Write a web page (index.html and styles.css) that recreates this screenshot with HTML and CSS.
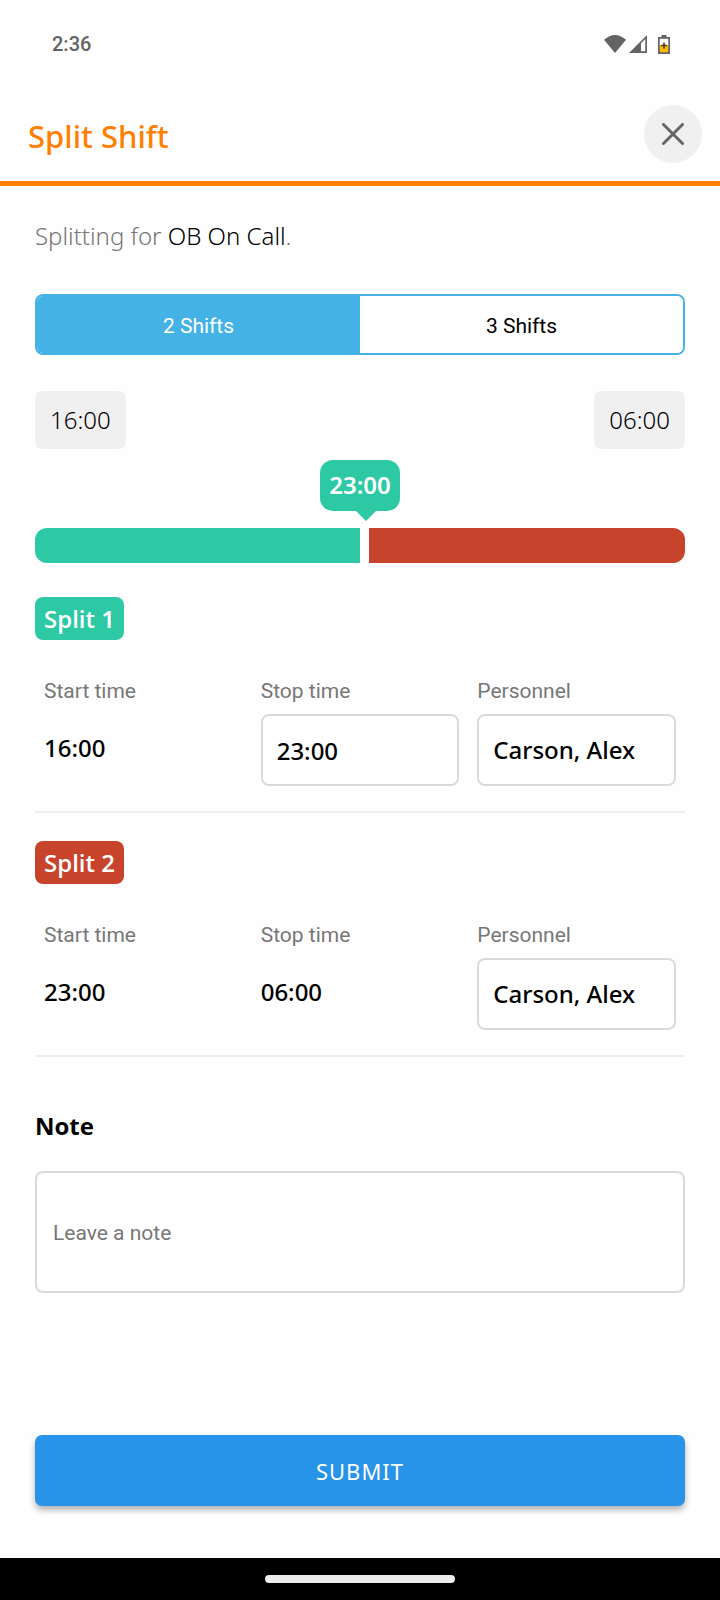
FILE: index.html
```html
<!DOCTYPE html>
<html lang="en">
<head>
<meta charset="utf-8">
<meta name="viewport" content="width=device-width, initial-scale=1">
<title>Split Shift</title>
<link rel="stylesheet" href="styles.css">
</head>
<body>
<div class="screen">
  <div class="status-bar">
    <span class="clock">2:36</span>
    <div class="status-icons">
      <svg width="22" height="18" viewBox="0 0 22 18" aria-hidden="true"><path d="M0 4.800Q11-4.800 22 4.800L11 18Z" fill="#636363"/></svg>
      <svg width="18" height="18" viewBox="0 0 18 18" aria-hidden="true"><path d="M0 18L18 0V18Z" fill="#636363"/><path d="M12 8.200L16.300 4V16.300H12Z" fill="#fff"/></svg>
      <svg class="battery" width="12" height="19" viewBox="0 0 12 19" aria-hidden="true"><path d="M3.500 0H8.500V2H12V19H0V2H3.500Z" fill="#636363"/><path d="M1.700 3.800H10.300V10H1.700Z" fill="#fff"/><path d="M1.700 10H10.300V17.300H1.700Z" fill="#fbb904"/><path d="M6 7.500V13.500M3 10.500H9" stroke="#4a4020" stroke-width="1.700"/></svg>
    </div>
  </div>

  <header class="header">
    <h1 class="title">Split Shift</h1>
    <button class="close" type="button" aria-label="Close">
      <svg width="22" height="22" viewBox="0 0 22 22" aria-hidden="true"><path d="M1.500 1.500L20.500 20.500M20.500 1.500L1.500 20.500" stroke="#666" stroke-width="3" stroke-linecap="round"/></svg>
    </button>
  </header>

  <form class="content">
    <p class="intro">Splitting for <span class="shift-name">OB On Call</span>.</p>

    <div class="segments" role="group" aria-label="Number of shifts">
      <button class="segment segment-active" type="button" aria-pressed="true">2 Shifts</button>
      <button class="segment" type="button" aria-pressed="false">3 Shifts</button>
    </div>

    <div class="range-ends">
      <span class="range-end">16:00</span>
      <span class="range-end">06:00</span>
    </div>

    <div class="slider">
      <output class="bubble" for="split-at">23:00</output>
      <input class="track" id="split-at" type="range" min="0" max="14" value="7" aria-label="Split time">
    </div>

    <section class="split">
      <h2 class="badge badge-first">Split 1</h2>
      <div class="fields">
        <div class="field">
          <span class="label">Start time</span>
          <span class="value">16:00</span>
        </div>
        <div class="field">
          <label class="label" for="stop-1">Stop time</label>
          <input class="box" id="stop-1" type="text" value="23:00">
        </div>
        <div class="field">
          <label class="label" for="person-1">Personnel</label>
          <select class="box" id="person-1"><option>Carson, Alex</option></select>
        </div>
      </div>
    </section>

    <section class="split">
      <h2 class="badge badge-second">Split 2</h2>
      <div class="fields">
        <div class="field">
          <span class="label">Start time</span>
          <span class="value">23:00</span>
        </div>
        <div class="field">
          <span class="label">Stop time</span>
          <span class="value">06:00</span>
        </div>
        <div class="field">
          <label class="label" for="person-2">Personnel</label>
          <select class="box" id="person-2"><option>Carson, Alex</option></select>
        </div>
      </div>
    </section>

    <label class="note-label" for="note">Note</label>
    <textarea class="note" id="note" rows="1" placeholder="Leave a note"></textarea>

    <button class="submit" type="submit">SUBMIT</button>
  </form>

  <div class="nav-bar"><span class="nav-pill"></span></div>
</div>
</body>
</html>
```
FILE: styles.css
```css
* {
  box-sizing: border-box;
}

body {
  margin: 0;
  background: #fefefe;
  color: #000;
  font-family: "Noto Sans", "Open Sans", sans-serif;
  font-size: 24px;
  line-height: 32px;
}

button,
input,
select,
textarea {
  margin: 0;
  font: inherit;
  color: inherit;
}

.screen {
  display: flex;
  flex-direction: column;
  min-height: 100vh;
}

.status-bar {
  display: flex;
  align-items: center;
  justify-content: space-between;
  height: 88px;
  padding: 0 50px 0 52px;
}

.clock {
  color: #636363;
  font-family: Roboto, sans-serif;
  font-size: 20px;
  font-weight: 500;
}

.status-icons {
  display: flex;
  align-items: center;
  gap: 3px;
}

.battery {
  margin-left: 8px;
}

.header {
  display: flex;
  align-items: center;
  justify-content: space-between;
  height: 98px;
  padding: 0 18px 2px 28px;
  border-bottom: 5px solid #ff8000;
}

.title {
  margin: 0;
  padding-top: 4px;
  color: #ff8000;
  font-size: 31px;
  font-weight: 500;
  line-height: 40px;
}

.close {
  display: flex;
  align-items: center;
  justify-content: center;
  width: 58px;
  height: 58px;
  padding: 0;
  border: 0;
  border-radius: 50%;
  background: #f0f0f0;
}

.content {
  display: flex;
  flex: 1;
  flex-direction: column;
  padding: 34px 35px 52px;
}

.intro {
  margin: 0 0 42px;
  color: #777;
  font-weight: 350;
}

.shift-name {
  color: #000;
}

.segments {
  display: grid;
  grid-template-columns: 1fr 1fr;
  height: 61px;
  overflow: hidden;
  border: 2px solid #44b2e4;
  border-radius: 8px;
}

.segment {
  padding: 2px 0 0;
  border: 0;
  background: #fff;
  font-family: Roboto, sans-serif;
  font-size: 21px;
}

.segment-active {
  background: #44b2e4;
  color: #fff;
}

.range-ends {
  display: flex;
  justify-content: space-between;
  margin-top: 36px;
}

.range-end {
  padding: 13px 15px;
  border-radius: 8px;
  background: #f0f0f0;
  font-weight: 350;
}

.slider {
  display: flex;
  flex-direction: column;
  align-items: center;
  gap: 17px;
  margin: 11px 0 34px;
}

.bubble {
  position: relative;
  padding: 9px 9px 10px;
  border-radius: 13px;
  background: #2dc9a4;
  color: #fff;
  font-weight: 600;
}

.bubble::after {
  content: "";
  position: absolute;
  top: 100%;
  left: calc(50% - 4px);
  border: 10px solid transparent;
  border-top-color: #2dc9a4;
  border-bottom: 0;
}

.track {
  width: 100%;
  height: 35px;
  appearance: none;
  border-radius: 12px;
  background: linear-gradient(to right, #2dc9a4 50%, #fff 50%, #fff calc(50% + 9px), #c8432b calc(50% + 9px));
}

.track::-webkit-slider-thumb {
  width: 9px;
  height: 35px;
  appearance: none;
  background: transparent;
}

.split {
  margin-bottom: 28px;
  padding-bottom: 25px;
  border-bottom: 2px solid #eee;
}

.badge {
  width: fit-content;
  margin: 0 0 35px;
  padding: 6px 9px 5px;
  border-radius: 8px;
  color: #fff;
  font-family: "Open Sans", "Noto Sans", sans-serif;
  font-size: 24px;
  font-weight: 600;
}

.badge-first {
  background: #2dc9a4;
}

.badge-second {
  background: #c8432b;
}

.fields {
  display: grid;
  grid-template-columns: repeat(3, 1fr);
}

.field {
  display: flex;
  flex-direction: column;
  gap: 7px;
  min-width: 0;
  padding: 0 9px;
}

.label {
  color: #777;
  font-family: Roboto, sans-serif;
  font-size: 21px;
}

.value {
  padding: 18px 0;
  font-weight: 500;
}

.box {
  width: 100%;
  height: 72px;
  padding: 0 14px;
  appearance: none;
  border: 2px solid #dadada;
  border-radius: 8px;
  background: #fff;
  font-weight: 500;
}

.note-label {
  margin: 25px 0 29px;
  font-family: "Open Sans", "Noto Sans", sans-serif;
  font-weight: 700;
}

.note {
  height: 122px;
  padding: 44px 16px 42px;
  resize: none;
  border: 2px solid #dadada;
  border-radius: 8px;
  background: #fff;
  font-family: Roboto, sans-serif;
  font-size: 21px;
}

.note::placeholder {
  color: #777;
}

.submit {
  height: 71px;
  margin-top: auto;
  border: 0;
  border-radius: 7px;
  background: #2793e9;
  box-shadow: 0 4px 6px rgba(0, 0, 0, 0.3);
  color: #fff;
  font-size: 22px;
  letter-spacing: 1px;
}

.nav-bar {
  display: flex;
  align-items: center;
  justify-content: center;
  height: 42px;
  background: #000;
}

.nav-pill {
  width: 190px;
  height: 8px;
  border-radius: 4px;
  background: #ececec;
}
```
